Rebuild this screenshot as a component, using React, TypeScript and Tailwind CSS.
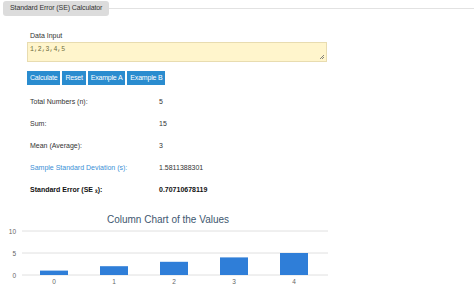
import React from "react";

const rows = [
  { label: "Total Numbers (n):", value: "5" },
  { label: "Sum:", value: "15" },
  { label: "Mean (Average):", value: "3" },
];

const values = [1, 2, 3, 4, 5];

function Chart() {
  const zeroY = 65;
  const unit = 4.4;
  return (
    <svg width="340" height="90" viewBox="0 0 340 90" className="block">
      <text x="168" y="13" textAnchor="middle" fontSize="10" fill="#3e576f" fontFamily="Liberation Sans, sans-serif">
        Column Chart of the Values
      </text>
      {[0, 5, 10].map((t) => {
        const y = zeroY - t * unit;
        return (
          <g key={t}>
            <line x1="22" x2="328" y1={y} y2={y} stroke="#e0e0e0" strokeWidth="1" />
            <text x="16" y={y + 2.5} textAnchor="end" fontSize="6.5" fill="#666" fontFamily="Liberation Sans, sans-serif">
              {t}
            </text>
          </g>
        );
      })}
      {values.map((v, i) => {
        const x = 40 + i * 60;
        const h = v * unit;
        return (
          <g key={i}>
            <rect x={x} y={zeroY - h} width="28" height={h} fill="#2f7ed8" />
            <text x={x + 14} y={zeroY + 9} textAnchor="middle" fontSize="6.5" fill="#666" fontFamily="Liberation Sans, sans-serif">
              {i}
            </text>
          </g>
        );
      })}
    </svg>
  );
}

export default function App() {
  return (
    <div className="w-[474px] h-[303px] bg-white overflow-hidden font-['Liberation_Sans',sans-serif] text-[#222]">
      {/* Tab header */}
      <div className="flex items-center pt-px">
        <div className="ml-[3px] h-[15px] px-[7px] flex items-center rounded-[3px] bg-[#dcdcdc] text-[7px] text-[#333] tracking-[-0.1px]">
          Standard Error (SE) Calculator
        </div>
        <div className="flex-1 h-px bg-[#e2e2e2]" />
      </div>

      <div className="pl-[27px]">
        {/* Input */}
        <div className="mt-[15px] ml-[3px] text-[7px] leading-[9px] text-[#333]">Data Input</div>
        <div className="relative mt-[2px] w-[300px] h-[20px] bg-[#fff5cc] border border-[#e8dcb0] px-[2px] py-[2px] font-['Liberation_Mono',monospace] text-[6.5px] text-[#6b6b3a]">
          1,2,3,4,5
          <svg width="6" height="6" viewBox="0 0 6 6" className="absolute right-[1px] bottom-[1px]">
            <path d="M5 1 L1 5 M5 3 L3 5" stroke="#666" strokeWidth="0.8" />
          </svg>
        </div>

        {/* Buttons */}
        <div className="mt-[9px] flex gap-[2px]">
          {["Calculate", "Reset", "Example A", "Example B"].map((b) => (
            <button
              key={b}
              className="h-[14px] px-[3px] bg-[#2a8ccf] text-white text-[7px] leading-[14px] tracking-[-0.2px]"
            >
              {b}
            </button>
          ))}
        </div>

        {/* Results */}
        <div className="mt-[6px] ml-[3px] text-[7px]">
          {rows.map((r) => (
            <div key={r.label} className="flex h-[22px] items-center text-[#333]">
              <span className="w-[129px]">{r.label}</span>
              <span>{r.value}</span>
            </div>
          ))}
          <div className="flex h-[22px] items-center">
            <span className="w-[129px] text-[#3b8fd6]">Sample Standard Deviation (s):</span>
            <span className="text-[#333]">1.5811388301</span>
          </div>
          <div className="flex h-[22px] items-center font-bold text-[#111]">
            <span className="w-[129px]">
              Standard Error (SE <sub className="text-[5px]">x̄</sub>):
            </span>
            <span>0.70710678119</span>
          </div>
        </div>
      </div>

      {/* Chart */}
      <div className="mt-[9px]">
        <Chart />
      </div>
    </div>
  );
}
